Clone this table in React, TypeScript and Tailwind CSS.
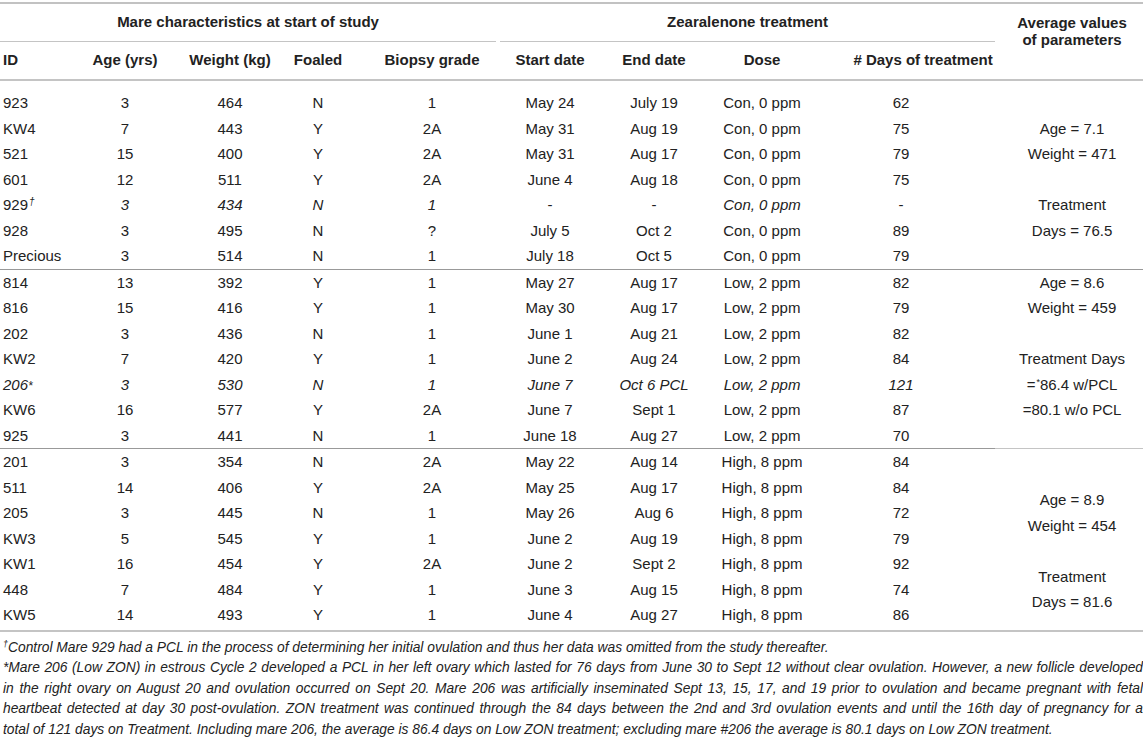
import React from "react";

type Row = {
  id: string;
  mark?: "dagger" | "star";
  cells: string[];
  italic?: number[];
};

const groups: { rows: Row[]; avg: React.ReactNode[] }[] = [
  {
    rows: [
      { id: "923", cells: ["3", "464", "N", "1", "May 24", "July 19", "Con, 0 ppm", "62"] },
      { id: "KW4", cells: ["7", "443", "Y", "2A", "May 31", "Aug 19", "Con, 0 ppm", "75"] },
      { id: "521", cells: ["15", "400", "Y", "2A", "May 31", "Aug 17", "Con, 0 ppm", "79"] },
      { id: "601", cells: ["12", "511", "Y", "2A", "June 4", "Aug 18", "Con, 0 ppm", "75"] },
      { id: "929", mark: "dagger", cells: ["3", "434", "N", "1", "-", "-", "Con, 0 ppm", "-"], italic: [0, 1, 2, 3, 6] },
      { id: "928", cells: ["3", "495", "N", "?", "July 5", "Oct 2", "Con, 0 ppm", "89"] },
      { id: "Precious", cells: ["3", "514", "N", "1", "July 18", "Oct 5", "Con, 0 ppm", "79"] },
    ],
    avg: ["", "Age = 7.1", "Weight = 471", "", "Treatment", "Days = 76.5", ""],
  },
  {
    rows: [
      { id: "814", cells: ["13", "392", "Y", "1", "May 27", "Aug 17", "Low, 2 ppm", "82"] },
      { id: "816", cells: ["15", "416", "Y", "1", "May 30", "Aug 17", "Low, 2 ppm", "79"] },
      { id: "202", cells: ["3", "436", "N", "1", "June 1", "Aug 21", "Low, 2 ppm", "82"] },
      { id: "KW2", cells: ["7", "420", "Y", "1", "June 2", "Aug 24", "Low, 2 ppm", "84"] },
      { id: "206", mark: "star", cells: ["3", "530", "N", "1", "June 7", "Oct 6 PCL", "Low, 2 ppm", "121"], italic: [-1, 0, 1, 2, 3, 4, 5, 6, 7] },
      { id: "KW6", cells: ["16", "577", "Y", "2A", "June 7", "Sept 1", "Low, 2 ppm", "87"] },
      { id: "925", cells: ["3", "441", "N", "1", "June 18", "Aug 27", "Low, 2 ppm", "70"] },
    ],
    avg: [
      "Age = 8.6",
      "Weight = 459",
      "",
      "Treatment Days",
      <>
        =<sup className="text-[9px] ml-[1px]">*</sup>86.4 w/PCL
      </>,
      "=80.1 w/o PCL",
      "",
    ],
  },
  {
    rows: [
      { id: "201", cells: ["3", "354", "N", "2A", "May 22", "Aug 14", "High, 8 ppm", "84"] },
      { id: "511", cells: ["14", "406", "Y", "2A", "May 25", "Aug 17", "High, 8 ppm", "84"] },
      { id: "205", cells: ["3", "445", "N", "1", "May 26", "Aug 6", "High, 8 ppm", "72"] },
      { id: "KW3", cells: ["5", "545", "Y", "1", "June 2", "Aug 19", "High, 8 ppm", "79"] },
      { id: "KW1", cells: ["16", "454", "Y", "2A", "June 2", "Sept 2", "High, 8 ppm", "92"] },
      { id: "448", cells: ["7", "484", "Y", "1", "June 3", "Aug 15", "High, 8 ppm", "74"] },
      { id: "KW5", cells: ["14", "493", "Y", "1", "June 4", "Aug 27", "High, 8 ppm", "86"] },
    ],
    avg: ["", "Age = 8.9", "Weight = 454", "", "Treatment", "Days = 81.6"],
  },
];

// column-specific tweaks so the text centres sit where the printed table has them
const colPad = ["", "", "", "pl-[10px]", "", "", "", "pr-[11px]"];

// vertical padding of each group's first / last row
const groupPad = [
  { top: "pt-[9px]", bottom: "" },
  { top: "", bottom: "" },
  { top: "", bottom: "pb-[2px] border-b-2 border-[#c4c4c4]" },
];

export default function App() {
  return (
    <div className="w-[1143px] h-[744px] bg-white pt-[2px] font-['Liberation_Sans',Arial,sans-serif] text-[15px] text-[#222] overflow-hidden">
      <table className="w-full table-fixed border-collapse border-t-2 border-[#c2c2c2]">
        <colgroup>
          <col className="w-[70px]" />
          <col className="w-[110px]" />
          <col className="w-[100px]" />
          <col className="w-[76px]" />
          <col className="w-[142px]" />
          <col className="w-[104px]" />
          <col className="w-[104px]" />
          <col className="w-[112px]" />
          <col className="w-[177px]" />
          <col className="w-[148px]" />
        </colgroup>
        <thead>
          <tr>
            <th colSpan={5} className="p-0 font-bold">
              <div className="mr-[2px] h-[38px] flex items-center justify-center border-b border-[#c4c4c4]">
                Mare characteristics at start of study
              </div>
            </th>
            <th colSpan={4} className="p-0 font-bold">
              <div className="ml-[2px] h-[38px] flex items-center justify-center border-b border-[#c4c4c4]">
                Zearalenone treatment
              </div>
            </th>
            <th rowSpan={2} className="p-0 pt-[10px] pl-[6px] align-top font-bold leading-[17px] border-b-2 border-[#c4c4c4]">
              Average values
              <br />
              of parameters
            </th>
          </tr>
          <tr className="h-[38px]">
            <th className="p-0 pl-[3px] text-left font-bold border-b-2 border-[#c4c4c4]">ID</th>
            <th className="p-0 font-bold border-b-2 border-[#c4c4c4]">Age (yrs)</th>
            <th className="p-0 font-bold border-b-2 border-[#c4c4c4] whitespace-nowrap">Weight (kg)</th>
            <th className="p-0 font-bold border-b-2 border-[#c4c4c4]">Foaled</th>
            <th className="p-0 pl-[10px] font-bold border-b-2 border-[#c4c4c4] whitespace-nowrap">Biopsy grade</th>
            <th className="p-0 font-bold border-b-2 border-[#c4c4c4]">Start date</th>
            <th className="p-0 font-bold border-b-2 border-[#c4c4c4]">End date</th>
            <th className="p-0 font-bold border-b-2 border-[#c4c4c4]">Dose</th>
            <th className="p-0 pl-[33px] font-bold border-b-2 border-[#c4c4c4] whitespace-nowrap">
              # Days of treatment
            </th>
          </tr>
        </thead>
        {groups.map((g, gi) => (
          <tbody key={gi}>
            {g.rows.map((r, ri) => {
              const first = ri === 0;
              const last = ri === g.rows.length - 1;
              const pad = [
                first ? groupPad[gi].top : "",
                last ? groupPad[gi].bottom : "",
                gi > 0 && first ? "border-t border-[#999]" : "",
              ].join(" ");
              const it = r.italic ?? [];
              return (
                <tr key={r.id}>
                  <td className={`p-0 pl-[3px] text-left whitespace-nowrap ${pad} ${it.includes(-1) ? "italic" : ""}`}>
                    <div className="h-[25.5px] leading-[25.5px]">
                      {r.id}
                      {r.mark === "dagger" && <sup className="italic text-[10px] ml-[1px]">†</sup>}
                      {r.mark === "star" && <span className="text-[12px]">*</span>}
                    </div>
                  </td>
                  {r.cells.map((c, ci) => (
                    <td
                      key={ci}
                      className={`p-0 text-center whitespace-nowrap ${pad} ${colPad[ci]} ${it.includes(ci) ? "italic" : ""}`}
                    >
                      <div className="h-[25.5px] leading-[25.5px]">{c}</div>
                    </td>
                  ))}
                  {first && (
                    <td
                      rowSpan={g.rows.length}
                      className={`p-0 pl-[6px] align-middle text-center ${groupPad[gi].top} ${groupPad[gi].bottom} ${gi > 0 ? "border-t border-[#999]" : ""}`}
                    >
                      <div className="flex flex-col justify-center">
                        {g.avg.map((a, ai) => (
                          <div key={ai} className="h-[25.5px] leading-[25.5px] whitespace-nowrap">
                            {a}
                          </div>
                        ))}
                      </div>
                    </td>
                  )}
                </tr>
              );
            })}
          </tbody>
        ))}
      </table>

      <div className="pt-[6px] pl-[3px] italic leading-[20.5px] text-[13.8px] text-[#222]">
        <div>
          <sup className="text-[9px]">†</sup>Control Mare 929 had a PCL in the process of determining her initial ovulation and thus her data was omitted from the study thereafter.
        </div>
        <div className="text-justify [text-align-last:justify]">
          *Mare 206 (Low ZON) in estrous Cycle 2 developed a PCL in her left ovary which lasted for 76 days from June 30 to Sept 12 without clear ovulation. However, a new follicle developed
        </div>
        <div className="text-justify [text-align-last:justify]">
          in the right ovary on August 20 and ovulation occurred on Sept 20. Mare 206 was artificially inseminated Sept 13, 15, 17, and 19 prior to ovulation and became pregnant with fetal
        </div>
        <div className="text-justify [text-align-last:justify]">
          heartbeat detected at day 30 post-ovulation. ZON treatment was continued through the 84 days between the 2nd and 3rd ovulation events and until the 16th day of pregnancy for a
        </div>
        <div>
          total of 121 days on Treatment. Including mare 206, the average is 86.4 days on Low ZON treatment; excluding mare #206 the average is 80.1 days on Low ZON treatment.
        </div>
      </div>
    </div>
  );
}
